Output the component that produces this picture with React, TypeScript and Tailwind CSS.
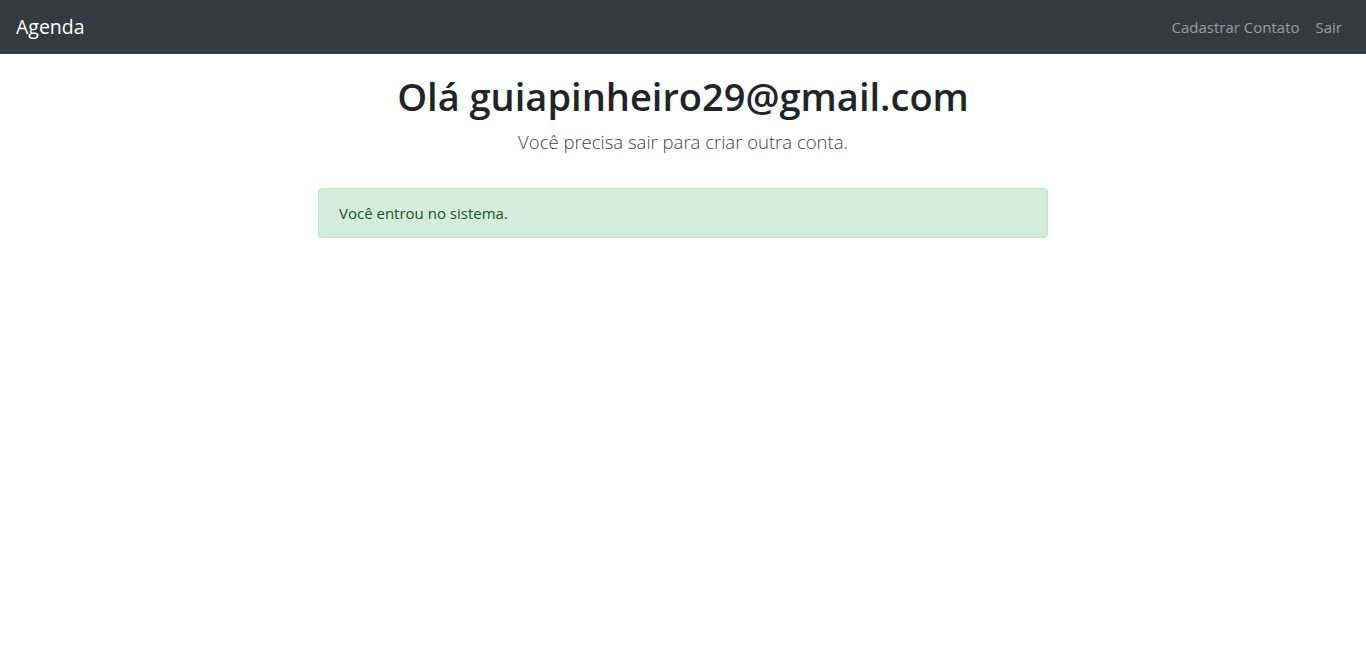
export default function App() {
  return (
    <div className="min-h-screen bg-white font-['Open_Sans',sans-serif] text-[#212529]">
      {/* NAVBAR */}
      <nav className="h-[54px] bg-[#343a40] flex items-center justify-between px-4">
        <a href="#" className="text-white text-[19.5px] leading-[30px]">Agenda</a>
        <div className="flex">
          <a href="#" className="px-2 text-[15px] text-white/50">Cadastrar Contato</a>
          <a href="#" className="px-2 text-[15px] text-white/50">Sair</a>
        </div>
      </nav>

      {/* CONTENT */}
      <div className="w-[730px] mx-auto">
        <div className="text-center pt-[18px]">
          <h1 className="text-[38px] leading-[48px] font-semibold">Olá guiapinheiro29@gmail.com</h1>
          <p className="text-[18.5px] leading-[30px] font-light text-[#3d3f45] mt-[7px]">Você precisa sair para criar outra conta.</p>
        </div>
        <div className="mt-[31px] h-[50px] flex items-center px-5 rounded border border-[#c3e6cb] bg-[#d4edda] text-[#155724] text-[15px]">
          Você entrou no sistema.
        </div>
      </div>
    </div>
  );
}
